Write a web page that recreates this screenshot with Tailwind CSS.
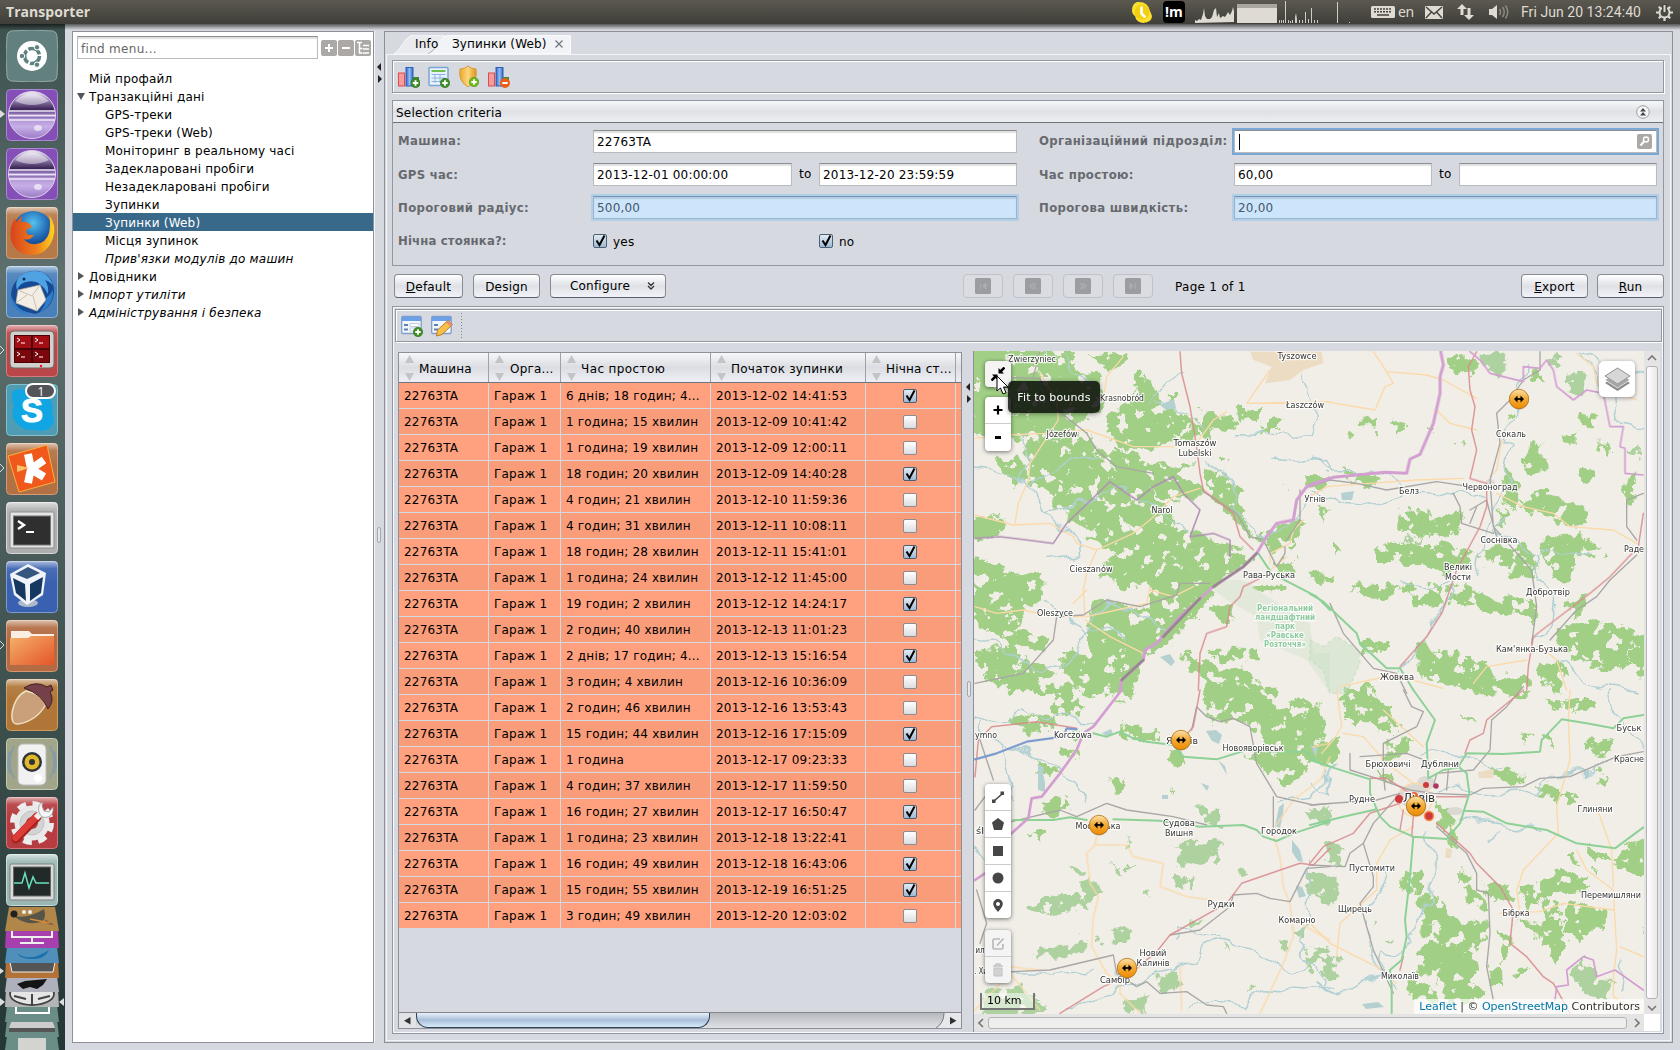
<!DOCTYPE html>
<html lang="uk">
<head>
<meta charset="utf-8">
<title>Transporter</title>
<script src="https://cdn.jsdelivr.net/npm/@tailwindcss/browser@4"></script>
</head>
<body class="w-[1680px] h-[1050px] overflow-hidden bg-[#d6d9df] font-['DejaVu_Sans',sans-serif] text-[12px] leading-[18px] tracking-[0.2px] text-black">
<svg width="0" height="0" class="absolute">
  <defs>
    <linearGradient id="gloss" x1="0" y1="0" x2="0" y2="1"><stop offset="0" stop-color="#fff" stop-opacity=".6"/><stop offset=".35" stop-color="#fff" stop-opacity=".08"/><stop offset="1" stop-color="#fff" stop-opacity="0"/></linearGradient>
    <linearGradient id="orb" x1="0" y1="0" x2="0" y2="1"><stop offset="0" stop-color="#f4effa"/><stop offset=".2" stop-color="#8f7ba8"/><stop offset=".38" stop-color="#3b2456"/><stop offset=".5" stop-color="#a488c9"/><stop offset=".75" stop-color="#c6aee6"/><stop offset="1" stop-color="#9c7cc6"/></linearGradient>
    <linearGradient id="org" x1="0" y1="0" x2="0" y2="1"><stop offset="0" stop-color="#fce2ae"/><stop offset=".45" stop-color="#f4ad3c"/><stop offset="1" stop-color="#ee8a00"/></linearGradient>
    <linearGradient id="fold" x1="0" y1="0" x2="1" y2="1"><stop offset="0" stop-color="#f5b06c"/><stop offset="1" stop-color="#e4552a"/></linearGradient>
    <linearGradient id="blu" x1="0" y1="0" x2="1" y2="0"><stop offset="0" stop-color="#2f68c8"/><stop offset=".5" stop-color="#8fbcf3"/><stop offset="1" stop-color="#2f68c8"/></linearGradient>
    <linearGradient id="gold" x1="0" y1="0" x2="1" y2="0"><stop offset="0" stop-color="#e9a82f"/><stop offset=".5" stop-color="#fbd77a"/><stop offset="1" stop-color="#dd9620"/></linearGradient>
    <radialGradient id="globe" cx=".5" cy=".3" r=".7"><stop offset="0" stop-color="#54c3ee"/><stop offset=".6" stop-color="#1d5fae"/><stop offset="1" stop-color="#0b2b6b"/></radialGradient>
    <linearGradient id="fox" x1="0" y1="0" x2="1" y2="0"><stop offset="0" stop-color="#d8431b"/><stop offset=".6" stop-color="#f0801d"/><stop offset="1" stop-color="#fbd51f"/></linearGradient>
    <symbol id="eclipse" viewBox="0 0 52 52"><circle cx="26" cy="26" r="23.5" fill="url(#orb)" stroke="#d9cdea" stroke-width="1"/><path d="M9 12Q25 -3 43 12Q26 20 9 12" fill="#fff" opacity=".45"/><path d="M3 22h46M2.500 26.500h47M3 31h46" stroke="#efe7f8" stroke-width="1.300"/><path d="M3 24h46M3 28.700h46" stroke="#8b6fb4" stroke-width="1"/><ellipse cx="32" cy="39" rx="4" ry="3" fill="#fff" opacity=".6"/></symbol>
    <symbol id="check" viewBox="0 0 14 14"><path d="M3.500 6.500l3 4.500L11.500 1.500" fill="none" stroke="#000" stroke-width="2"/></symbol>
    <symbol id="plusdot" viewBox="0 0 10 10"><circle cx="5" cy="5" r="4.700" fill="#3f8f26" stroke="#2c6a1a" stroke-width=".6"/><path d="M5 2.300v5.400M2.300 5h5.400" stroke="#fff" stroke-width="1.800"/></symbol>
    <symbol id="plusdotlight" viewBox="0 0 10 10"><circle cx="5" cy="5" r="4.700" fill="#6fb91c" stroke="#4e9212" stroke-width=".6"/><path d="M5 2.300v5.400M2.300 5h5.400" stroke="#fff" stroke-width="1.800"/></symbol>
    <symbol id="marker" viewBox="0 0 22 22"><circle cx="11" cy="11.500" r="10" fill="#7a6a50" opacity=".5"/><circle cx="11" cy="11" r="9.700" fill="url(#org)" stroke="#b8730f" stroke-width=".8"/><path d="M7 11h8" stroke="#000" stroke-width="1.700"/><path d="M9.500 7.500L6 11l3.500 3.500zM12.500 7.500L16 11l-3.500 3.500z"/></symbol>
    <filter id="rough" x="-5%" y="-5%" width="110%" height="110%"><feTurbulence type="fractalNoise" baseFrequency=".026" numOctaves="4" seed="8" result="n"/><feDisplacementMap in="SourceGraphic" in2="n" scale="56" xChannelSelector="R" yChannelSelector="G" result="d"/><feTurbulence type="fractalNoise" baseFrequency=".026" numOctaves="4" seed="21"/><feColorMatrix values="0 0 0 0 0 0 0 0 0 0 0 0 0 0 0 30 0 0 0 -18.600" result="h"/><feComposite in="d" in2="h" operator="out"/></filter>
    <filter id="wob" x="-5%" y="-5%" width="110%" height="110%"><feTurbulence type="fractalNoise" baseFrequency=".04" numOctaves="2" seed="5"/><feDisplacementMap in="SourceGraphic" scale="24" xChannelSelector="R" yChannelSelector="G"/></filter>
  </defs>
</svg>

<header class="relative z-20 flex h-[24px] items-center bg-linear-to-b from-[#5b594f] to-[#3f3e39] pl-[6px] text-[#dfdbd2] tracking-normal">
  <span class="w-[1125px] font-['Open_Sans',sans-serif] text-[14px] font-bold tracking-[0.05px]">Transporter</span>
  <svg class="w-[22px] h-[24px]" viewBox="0 0 22 24"><path d="M6 2Q1 4 1 10q0 4 3 6 1 6 8 7 9-1 9-7-1-3-2-5Q17 1 6 2z" fill="#fbe02c"/><circle cx="11" cy="12" r="7.500" fill="#f3cf12"/><path d="M10.500 7.500v6l3 3" fill="none" stroke="#fff" stroke-width="2.600" stroke-linecap="round"/></svg>
  <span class="ml-[10px] flex h-[22px] w-[22px] items-center justify-center rounded-[4px] bg-black font-['Open_Sans',sans-serif] text-[14px] font-bold text-white">!m</span>
  <svg class="ml-[10px] h-[24px] w-[156px]" viewBox="0 0 156 24" fill="#dfdbd2"><path d="M0 23v-3l2 1 2-2 2 1 2-6 1-6 1 8 2 3 3 0 2-2 2-7 2-2 1 9 2-4 1 5 3-2 2 1 2-3 1-2 2 3 2-4 1-4 1 4v11zM42 4h40v19H42z"/><path d="M42 4h40v4H42z" fill="#aaa69d"/><path d="M84 23v-3h1v3zm2 0v-3h1v3zm2 0v-3h1v3zM90 1h1v22h-1zm3 22v-3h1v3zm2 0v-2h1v2zm2 0v-3h1v3zm3 0v-6l1-4 1 6v4zm4 0v-3h1v3zm3 0v-3h1v3zm3 0V12h1v11zm3 0v-4h1v4zm3 0V8h1v15zm3 0v-3h1v3zm3 0v-3h1v3zM142 2h1v21h-1zm12 20h1v1h-1z" opacity=".9"/></svg>
  <svg class="ml-[20px] h-[14px] w-[24px]" viewBox="0 0 24 14"><rect y="1" width="24" height="12" rx="1.500" fill="#dfdbd2"/><path d="M3 4h18M3 6.800h18" stroke="#45433d" stroke-width="1.500" stroke-dasharray="2 1"/><path d="M6 10h12" stroke="#45433d" stroke-width="1.500"/></svg>
  <span class="ml-[3px] w-[27px] font-['Noto_Sans',sans-serif] text-[14px] tracking-[-0.3px]">en</span>
  <svg class="h-[13px] w-[18px]" viewBox="0 0 18 13"><rect width="18" height="13" rx="1" fill="#dfdbd2"/><path d="M1 1l8 7 8-7M1 12l5.500-6M17 12l-5.500-6" fill="none" stroke="#45433d" stroke-width="1.400"/></svg>
  <svg class="ml-[14px] h-[16px] w-[17px]" viewBox="0 0 17 16" fill="#dfdbd2"><path d="M5 0l5 5H6.500v6h-3V5H0zM12 16l-5-5h3.500V4h3v7H17z"/></svg>
  <svg class="ml-[15px] h-[16px] w-[20px]" viewBox="0 0 20 16"><path d="M0 5h3l5-4v14l-5-4H0z" fill="#dfdbd2"/><path d="M10.500 5q2 3 0 6M13.500 3q3.500 5 0 10M16.500 1.500q4.500 6.500 0 13" fill="none" stroke="#8d8a82" stroke-width="1.500"/></svg>
  <span class="ml-[12px] w-[135px] whitespace-nowrap font-['Roboto',sans-serif] text-[14px] tracking-[0.05px]">Fri Jun 20 13:24:40</span>
  <svg class="h-[17px] w-[17px]" viewBox="0 0 17 17" fill="none" stroke="#dfdbd2"><circle cx="8.500" cy="8.500" r="5" stroke-width="2"/><path d="M2.800 2.800l2 2M14.200 2.800l-2 2M2.800 14.200l2-2M14.200 14.200l-2-2M0 8.500h3M14 8.500h3M8.500 14v3" stroke-width="2.200"/><path d="M8.500 0v8" stroke="#45433d" stroke-width="5"/><path d="M8.500 1v7" stroke-width="2"/></svg>
</header>

<main class="relative flex h-[1026px]">
  <div class="pointer-events-none absolute inset-x-0 top-0 z-10 h-[6px] bg-linear-to-b from-black/60 to-transparent"></div>

  <nav class="relative flex w-[65px] flex-col gap-[7px] bg-linear-to-b from-[#3d514e] via-[#5f716e] via-25% to-[#243735] pl-[6px] pt-[6px]">
    <svg class="size-[52px] shrink-0" viewBox="0 0 52 52"><path d="M5 1Q26-1 47 1q4 1 4 5 2 20 0 40 0 4-4 5-21 2-42 0-4-1-4-5-2-20 0-40 0-4 4-5z" fill="#62817e" stroke="#8fa9a6"/><circle cx="26" cy="26" r="15" fill="#fff"/><circle cx="26" cy="26" r="7.500" fill="none" stroke="#5f8180" stroke-width="3.600" stroke-dasharray="13.700 2"/><g fill="#5f8180" stroke="#fff"><circle cx="16" cy="26" r="2.700"/><circle cx="31" cy="17.300" r="2.700"/><circle cx="31" cy="34.700" r="2.700"/></g></svg>
    <svg class="size-[52px] shrink-0" viewBox="0 0 52 52"><rect x=".5" y=".5" width="51" height="51" rx="4" fill="#8450b8" stroke="#a988cf"/><use href="#eclipse"/></svg>
    <svg class="size-[52px] shrink-0" viewBox="0 0 52 52"><rect x=".5" y=".5" width="51" height="51" rx="4" fill="#8450b8" stroke="#a988cf"/><use href="#eclipse"/></svg>
    <svg class="size-[52px] shrink-0" viewBox="0 0 52 52"><rect x=".5" y=".5" width="51" height="51" rx="4" fill="#b5794a" stroke="#d3a27c"/><rect width="52" height="22" rx="4" fill="url(#gloss)"/><circle cx="27" cy="24" r="20" fill="url(#globe)"/><path d="M43 8q8 10 4 23-5 15-19 17Q10 49 5 33 3 20 9 11l1 4 6-6-1 6q8-1 11 5-4 2-6 3 0 4 3 5 3 0 5 0-4 6-10 4 4 6 12 5 10-1 13-11 2-9 0-18z" fill="url(#fox)"/></svg>
    <svg class="size-[52px] shrink-0" viewBox="0 0 52 52"><rect x=".5" y=".5" width="51" height="51" rx="4" fill="#4a80ba" stroke="#8db4dc"/><rect width="52" height="22" rx="4" fill="url(#gloss)"/><path d="M13 12Q22 2 36 6q12 5 12 20-1 17-19 22l-8-2Q7 42 5 30q0-11 8-18z" fill="#174a94"/><path d="M12 13Q20 2 36 6q8 4 11 13-4-4-8-5 4 6 3 14Q34 12 20 16q-6 1-9 8-2-6 1-11z" fill="#4fa3e2"/><circle cx="18" cy="13" r="1.500" fill="#0d2b55"/><path d="M12 24l22-5 6 15-9 11-21-8z" fill="#f2eee6" stroke="#b9b2a5" stroke-width=".7"/><path d="M12 24l14 6 8-11M10 37l11-8M31 45l-4-15" fill="none" stroke="#c9bfae"/><path d="M5 28q4 16 20 20-14 1-19-12zM47 24q1 15-14 23 7-8 7-15 4-3 7-8z" fill="#2f7ccb"/></svg>
    <svg class="size-[52px] shrink-0" viewBox="0 0 52 52"><rect x=".5" y=".5" width="51" height="51" rx="4" fill="#b94649" stroke="#db7a7c"/><rect width="52" height="22" rx="4" fill="url(#gloss)"/><rect x="4" y="6" width="44" height="37" rx="4" fill="#d2d0cd" stroke="#6d6a67"/><rect x="8" y="10" width="36" height="28" fill="#470307"/><path d="M9 11h16v12H9zM27 11h16v12H27z" fill="#a30d14"/><path d="M9 25h16v12H9zM27 25h16v12H27z" fill="#7b070d"/><path d="M11 13l3 2-3 2M15 18h4M29 13l3 2-3 2M33 18h4M11 27l3 2-3 2M15 32h4M29 27l3 2-3 2M33 32h4" fill="none" stroke="#fff"/><circle cx="35" cy="41" r="1.200" fill="#e11"/></svg>
    <svg class="size-[52px] shrink-0 overflow-visible" viewBox="0 0 52 52"><rect x=".5" y=".5" width="51" height="51" rx="4" fill="#4f9db4" stroke="#84c0d0"/><path d="M6 14Q4 5 15 5q4 0 6 2 16-3 23 8 4 7 2 14 4 8-1 14-7 6-14 3-16 2-23-10-3-7 0-14-2-3-2-8z" fill="#12a5e4"/><text x="26" y="38" text-anchor="middle" font-family="Liberation Sans" font-weight="bold" font-size="33" fill="#fff" stroke="#fff" stroke-width="1">S</text><rect x="20" y="0" width="29" height="14" rx="7" fill="#54555a" stroke="#fff" stroke-width="2"/><text x="35" y="11.500" text-anchor="middle" font-family="Open Sans" font-size="12" fill="#fff">1</text></svg>
    <svg class="size-[52px] shrink-0" viewBox="0 0 52 52"><rect x=".5" y=".5" width="51" height="51" rx="4" fill="#b27145" stroke="#d59b73"/><rect width="52" height="22" rx="4" fill="url(#gloss)"/><path d="M2 13L41 2l8 37-36 10z" fill="#f0581c" stroke="#f9b13f"/><g stroke="#fff" stroke-width="8"><path d="M25 26L22 11M25 26l13-9M25 26l13 8M25 26l-3 14"/></g><path d="M11 22l12 3-12 4z" fill="#f9c26a"/></svg>
    <svg class="size-[52px] shrink-0" viewBox="0 0 52 52"><rect x=".5" y=".5" width="51" height="51" rx="4" fill="#adafae" stroke="#d5d6d5"/><rect width="52" height="22" rx="4" fill="url(#gloss)"/><rect x="4" y="10" width="44" height="36" rx="1" fill="#e4e4e4" stroke="#8b8b8b"/><rect x="7.500" y="14" width="37" height="29" fill="#2f2f2f" stroke="#777"/><path d="M12 19l6 4-6 4" fill="none" stroke="#fff" stroke-width="2.400"/><path d="M20 30h8" stroke="#fff" stroke-width="2"/></svg>
    <svg class="size-[52px] shrink-0" viewBox="0 0 52 52"><rect x=".5" y=".5" width="51" height="51" rx="4" fill="#3961b0" stroke="#7d9bd2"/><rect width="52" height="22" rx="4" fill="url(#gloss)"/><ellipse cx="22" cy="42" rx="10" ry="4" fill="#aeb9cd"/><path d="M4 13L22 3l18 9-3 22-16 10L8 34z" fill="#f0f4fa"/><path d="M9 13l13-7 12 6-13 6z" fill="#35577f"/><path d="M7 17l12 6 1 17-10-8zM37 16l-13 7v17l11-8z" fill="#16375f"/></svg>
    <svg class="size-[52px] shrink-0" viewBox="0 0 52 52"><rect x=".5" y=".5" width="51" height="51" rx="4" fill="#b26b43" stroke="#d59670"/><rect width="52" height="22" rx="4" fill="url(#gloss)"/><path d="M5 11h18l3 3h22v8H5z" fill="#fbeee4"/><path d="M4 18h18l3-2h23v29H4z" fill="url(#fold)"/></svg>
    <svg class="size-[52px] shrink-0" viewBox="0 0 52 52"><rect x=".5" y=".5" width="51" height="51" rx="4" fill="#af7637" stroke="#d09c5f"/><rect width="52" height="22" rx="4" fill="url(#gloss)"/><path d="M20 12Q36 15 40 25 31 42 12 45 5 46 6 34 9 17 20 12z" fill="#c9a07a" stroke="#ecdfc0" stroke-width="1.500"/><path d="M18 9Q30 1 41 8l4-2 2 5-3 2q5 8-2 17Q36 15 18 9z" fill="#75404a" stroke="#43201f"/></svg>
    <svg class="size-[52px] shrink-0" viewBox="0 0 52 52"><rect x=".5" y=".5" width="51" height="51" rx="4" fill="#a1a68a" stroke="#c6cab2"/><path d="M8 8Q0 24 8 40M44 8q8 16 0 32M4 13Q0 24 4 36M48 13q4 11 0 23" fill="none" stroke="#8399ab" stroke-width="1.500"/><rect x="12" y="6" width="28" height="41" rx="5" fill="#f1f1f1" stroke="#bbb"/><circle cx="26" cy="24" r="10" fill="#30333a"/><circle cx="26" cy="24" r="7.500" fill="#e0b92a"/><circle cx="26" cy="24" r="3" fill="#30333a"/><circle cx="32" cy="40" r="4" fill="#fff"/></svg>
    <svg class="size-[52px] shrink-0" viewBox="0 0 52 52"><rect x=".5" y=".5" width="51" height="51" rx="4" fill="#b53c40" stroke="#d97376"/><rect width="52" height="22" rx="4" fill="url(#gloss)"/><circle cx="26" cy="26" r="19" fill="none" stroke="#ececec" stroke-width="6" stroke-dasharray="8.500 6.420"/><circle cx="26" cy="26" r="17.500" fill="#e9e9e9"/><circle cx="26" cy="26" r="12" fill="#d3d3d3" stroke="#c2c2c2"/><circle cx="26" cy="26" r="6" fill="#b53c40"/><path d="M10 42L31 20" stroke="#a81f1d" stroke-width="9" stroke-linecap="round"/><path d="M9.500 41L31 19" stroke="#dd3d38" stroke-width="6.500" stroke-linecap="round"/><path d="M30 21l6-6" stroke="#eee" stroke-width="6"/><path d="M37 5q-6 3-4 10t9 5q6-2 5-10l-4 5-5-1-2-5z" fill="#f5f5f5" stroke="#999" stroke-width=".8"/></svg>
    <svg class="-mt-[2px] size-[52px] shrink-0" viewBox="0 0 52 52"><rect x=".5" y=".5" width="51" height="51" rx="4" fill="#9bb7b3" stroke="#c8dbd8"/><rect width="52" height="22" rx="4" fill="url(#gloss)"/><rect x="4" y="10" width="44" height="36" rx="1" fill="#d8dbda" stroke="#7b807f"/><rect x="7.500" y="13" width="37" height="29" fill="#222a29" stroke="#666"/><path d="M8 29h8l3-10 4 15 4-11 3 6h13" fill="none" stroke="#67e0b8" stroke-width="1.500"/></svg>
    <svg class="-ml-[6px] -mt-[7px] h-[144px] w-[65px] shrink-0" viewBox="0 0 65 144">
      <path d="M7 130h50l2 14H5z" fill="#6b8d87"/><path d="M18 132h28v12H18z" fill="#d3d3cf"/>
      <path d="M7 113h50l2 18H5z" fill="#6b8d87"/><path d="M12 114h40l3 8v4H9v-4z" fill="#ccc"/><path d="M9 122h46v4H9z" fill="#555"/>
      <path d="M7 99h50l2 17H5z" fill="#6b8d87"/><path d="M16 101v6h33v-6" fill="none" stroke="#fff" stroke-width="2"/>
      <path d="M6 84h52l1 17H5z" fill="#b4b6b5"/><ellipse cx="32" cy="88" rx="22" ry="11" fill="#e5e5e5" stroke="#444" stroke-width="1.800"/><path d="M14 90l12 3M50 90l-12 3M32 88v10" stroke="#444" stroke-width="2"/>
      <path d="M7 70h50l2 16H5z" fill="#aeb1bc"/><path d="M17 78l8-3 22-2-4 6-6 4-7-2-7 2z" fill="#151515"/>
      <path d="M6 55h52l1 17H5z" fill="#b37238"/><path d="M10 56h45l-2 10H12z" fill="#555" stroke="#eee"/>
      <path d="M7 41h50l2 16H5z" fill="#4f8fb9"/><path d="M17 47q12 10 32-3-4 9-16 9-13 0-16-6z" fill="#1a6fae"/>
      <path d="M6 24h52l1 18H5z" fill="#a83fae"/><path d="M12 25v6h40v-6M32 32v6M20 37h24" fill="none" stroke="#eee" stroke-width="2"/>
      <path d="M9 1h46l4 24H5z" fill="#b08748"/><path d="M14 10q14 3 30-7 3 10-3 13-16 4-27-6zM44 13l10 6-6-1z" fill="#57544a"/><path d="M30 13l20 4" stroke="#d88a35" stroke-width="1.500"/><circle cx="14" cy="8" r="3.500" fill="#222"/><circle cx="24" cy="6" r="2" fill="#eee"/><circle cx="30" cy="6" r="2" fill="#eee"/>
      <path d="M0 62l4 3-4 3M0 92l5 4-5 4zM64 92l-5 4 5 4z" fill="#ddd"/>
    </svg>
    <svg class="absolute left-0 top-[80px] h-[560px] w-[5px]" viewBox="0 0 5 560"><path d="M0 6l5 4-5 4z" fill="#ddd"/><g fill="none" stroke="#ddd"><path d="M0 242l4 4-4 4M0 360l4 4-4 4M0 537l4 4-4 4"/></g></svg>
  </nav>

  <aside class="ml-[7px] mt-[7px] flex h-[1012px] w-[302px] flex-col border border-[#8d9095] bg-white">
    <div class="flex items-center pl-[4px] pt-[4px]">
      <div class="h-[23px] w-[241px] border border-[#b9bbbf] border-t-[#8a8c90] bg-white pl-[3px] pt-px text-[12px] leading-[22px] tracking-[0.300px] text-[#666] shadow-[inset_0_2px_1px_#e0e0e0]">find menu...</div>
      <div class="ml-[3px] flex gap-px">
        <svg class="size-[16px]" viewBox="0 0 16 16"><rect width="16" height="16" rx="2" fill="#aba8a5"/><path d="M8 4v8M4 8h8" stroke="#fff" stroke-width="2"/></svg>
        <svg class="size-[16px]" viewBox="0 0 16 16"><rect width="16" height="16" rx="2" fill="#aba8a5"/><path d="M4 8h8" stroke="#fff" stroke-width="2"/></svg>
        <svg class="size-[16px]" viewBox="0 0 16 16"><rect width="16" height="16" rx="2" fill="#aba8a5"/><path d="M2 2.500h5M4.500 3v10h3M4.500 8.500h3M8 5.500h6M8 9h6M8 13h6" fill="none" stroke="#fff" stroke-width="1.500"/></svg>
      </div>
    </div>
    <ul id="tree" class="mt-[10px]"></ul>
  </aside>

  <div class="mt-[7px] flex h-[1012px] w-[10px] flex-col items-start border-l border-white/70 pl-px">
    <svg class="mt-[31px] h-[22px] w-[7px]" viewBox="0 0 7 22"><path d="M5 1v8L1 5zM2 13v8l4-4z" fill="#222"/></svg>
    <span class="ml-px mt-[443px] h-[16px] w-[4px] rounded-[2px] border border-[#a3a6ac] bg-[#e6e8ec]"></span>
  </div>

  <section class="mt-[7px] flex h-[1012px] w-[1289px] flex-col border border-[#8d9095] pb-px">
    <div class="flex h-[22px] pl-[9px] pt-[3px]">
      <div class="relative flex h-[19px] w-[177px]">
        <svg class="absolute inset-0" width="177" height="19" viewBox="0 0 177 19"><path d="M0 19Q4 17 8 10T18 0h30q3 0 4 3l-8 16z" fill="#e9ebef" stroke="#f8f9fb"/><path d="M34 19q5-2 10-10T56 0h118q3 0 3 3v16z" fill="#f1f3f7" stroke="#fff"/><path d="M34 19q5-2 10-10" fill="none" stroke="#a9adb5"/></svg>
        <span class="relative ml-[21px] w-[37px]">Info</span><span class="relative w-[103px] whitespace-nowrap tracking-[0.15px]">Зупинки (Web)</span>
        <svg class="relative mt-[5px] size-[8px]" viewBox="0 0 8 8"><path d="M.5.5l7 7M7.500.5l-7 7" stroke="#74777c" stroke-width="1.300"/></svg>
      </div>
    </div>
    <div class="mx-px flex flex-1 flex-col border border-[#f3f5f8] pl-[5px] pr-[6px] pt-[5px]">
      <div class="flex h-[33px] w-[1272px] items-center gap-[8px] border border-[#9297a1] pl-[5px] shadow-[inset_1px_1px_#fff,1px_1px_#fff]">
        <svg class="size-[22px]" viewBox="0 0 22 22"><rect x=".5" y="7" width="6" height="13" fill="#f79a9a" stroke="#e44a4c"/><rect x="8" y="1.500" width="7" height="18.500" fill="url(#blu)" stroke="#2c5fb5"/><path d="M15 11h6v10h-6z" fill="#3b8b3f"/><use href="#plusdot" x="12.500" y="12" width="10" height="10"/></svg>
        <svg class="size-[22px]" viewBox="0 0 22 22"><rect x="1" y="1.500" width="19" height="18" rx="1" fill="#e9f2fb" stroke="#7aa5d6" stroke-width="1.500"/><path d="M3.500 5h14" stroke="#6fbf4f" stroke-width="2"/><path d="M3.500 8.500h14M3.500 12h14M3.500 15.500h10M7 8v9M12 8v9" stroke="#8db4df"/><use href="#plusdot" x="12" y="12" width="10" height="10"/></svg>
        <svg class="size-[22px] overflow-visible" viewBox="-1 0 22 22"><path d="M1 3q5 0 8-3 3 3 8 3 2 12-8 18Q-1 15 1 3z" fill="url(#gold)" stroke="#d69a34"/><use href="#plusdotlight" x="10" y="11" width="10" height="10"/></svg>
        <svg class="size-[22px]" viewBox="0 0 22 22"><rect x=".5" y="7" width="6" height="13" fill="#f79a9a" stroke="#e44a4c"/><rect x="8" y="1.500" width="7" height="18.500" fill="url(#blu)" stroke="#2c5fb5"/><path d="M15 11h6v9h-6z" fill="#3b8b3f"/><circle cx="17" cy="17" r="5" fill="#ea5f15"/><path d="M14.300 17h5.400" stroke="#fff" stroke-width="2"/></svg>
      </div>

      <div class="mt-[7px] h-[166px] w-[1272px] border border-[#9297a1]">
        <div class="flex h-[22px] items-center justify-between border-b border-[#6d7178] bg-linear-to-b from-[#f6f7f9] via-[#dfe1e5] to-[#eceef2] pl-[3px] pr-[13px]">
          <span class="pt-[2px] tracking-[0.25px]">Selection criteria</span>
          <svg class="size-[14px]" viewBox="0 0 14 14"><circle cx="7" cy="7" r="6.300" fill="#f5f6f8" stroke="#999ca2"/><path d="M7 3l3 3.500H4zM7 7l3 3.500H4z" fill="#444"/></svg>
        </div>
        <div class="grid grid-cols-[195px_424px_22px_195px_423px] grid-rows-[23px_23px_23px_23px] gap-y-[10px] pl-[5px] pt-[7px] leading-[22px]">
          <b class="whitespace-nowrap text-[#66696f] text-[11.700px] leading-[23px] tracking-[0.350px]">Машина:</b>
          <div class="border border-[#b9bbbf] border-t-[#8a8c90] bg-white pl-[3px] shadow-[inset_0_2px_1px_#e0e0e0]">22763TA</div><i></i>
          <b class="whitespace-nowrap text-[#66696f] text-[11.700px] leading-[23px] tracking-[0.350px]">Організаційний підрозділ:</b>
          <div class="flex items-center justify-between border border-[#b9bbbf] border-t-[#8a8c90] bg-white px-[4px] shadow-[0_0_0_2px_#7aa7d3]"><span class="h-[16px] w-px bg-black"></span><svg class="size-[15px]" viewBox="0 0 15 15"><rect width="15" height="15" rx="2" fill="#aba8a5"/><circle cx="9" cy="5.500" r="2.500" fill="none" stroke="#fff" stroke-width="1.500"/><path d="M7 7.500L3.500 11.500" stroke="#fff" stroke-width="2"/></svg></div>

          <b class="whitespace-nowrap text-[#66696f] text-[11.700px] leading-[24px] tracking-[0.250px]">GPS час:</b>
          <div class="flex"><div class="w-[199px] border border-[#b9bbbf] border-t-[#8a8c90] bg-white pl-[3px] shadow-[inset_0_2px_1px_#e0e0e0]">2013-12-01 00:00:00</div><span class="w-[27px] pl-[7px] leading-[23px]">to</span><div class="w-[198px] border border-[#b9bbbf] border-t-[#8a8c90] bg-white pl-[3px] shadow-[inset_0_2px_1px_#e0e0e0]">2013-12-20 23:59:59</div></div><i></i>
          <b class="whitespace-nowrap text-[#66696f] text-[11.700px] leading-[24px] tracking-[0.350px]">Час простою:</b>
          <div class="flex"><div class="w-[198px] border border-[#b9bbbf] border-t-[#8a8c90] bg-white pl-[3px] shadow-[inset_0_2px_1px_#e0e0e0]">60,00</div><span class="w-[27px] pl-[7px] leading-[23px]">to</span><div class="w-[198px] border border-[#b9bbbf] border-t-[#8a8c90] bg-white shadow-[inset_0_2px_1px_#e0e0e0]"></div></div>

          <b class="whitespace-nowrap text-[#66696f] text-[11.700px] leading-[24px] tracking-[0.350px]">Пороговий радіус:</b>
          <div class="border border-[#9ab4d0] border-t-[#7593b3] bg-[#cde5fa] pl-[3px] text-[#45586b] shadow-[0_0_0_2px_#b3cfe8,inset_0_2px_1px_#b5cde4]">500,00</div><i></i>
          <b class="whitespace-nowrap text-[#66696f] text-[11.700px] leading-[24px] tracking-[0.350px]">Порогова швидкість:</b>
          <div class="border border-[#9ab4d0] border-t-[#7593b3] bg-[#cde5fa] pl-[3px] text-[#45586b] shadow-[0_0_0_2px_#b3cfe8,inset_0_2px_1px_#b5cde4]">20,00</div>

          <b class="whitespace-nowrap text-[#66696f] text-[11.700px] leading-[24px] tracking-[0.150px]">Нічна стоянка?:</b>
          <div class="flex items-center">
            <span class="size-[14px] rounded-[2px] border border-[#4b6076] bg-linear-to-b from-[#e2ebf3] to-[#9fb9d2]"><svg class="size-[14px] -ml-px -mt-px" viewBox="0 0 14 14"><use href="#check"/></svg></span><span class="w-[212px] pl-[6px] pt-[2px]">yes</span>
            <span class="size-[14px] rounded-[2px] border border-[#4b6076] bg-linear-to-b from-[#e2ebf3] to-[#9fb9d2]"><svg class="size-[14px] -ml-px -mt-px" viewBox="0 0 14 14"><use href="#check"/></svg></span><span class="pl-[6px] pt-[2px]">no</span>
          </div>
        </div>
      </div>

      <div class="mt-[8px] flex h-[24px] items-center pl-[2px] leading-[24px]">
        <button class="h-[24px] w-[69px] rounded-[4px] border border-[#888c93] border-b-[#5c6068] bg-linear-to-b from-white via-[#dfe1e6] to-[#f1f3f8]"><u>D</u>efault</button>
        <button class="ml-[10px] h-[24px] w-[67px] rounded-[4px] border border-[#888c93] border-b-[#5c6068] bg-linear-to-b from-white via-[#dfe1e6] to-[#f1f3f8]">Design</button>
        <button class="ml-[10px] flex h-[24px] w-[116px] items-center rounded-[4px] border border-[#888c93] border-b-[#5c6068] bg-linear-to-b from-white via-[#dfe1e6] to-[#f1f3f8] pl-[19px] leading-[20px]">Configure<svg class="ml-[17px] size-[8px]" viewBox="0 0 8 8"><path d="M1 .5l3 3 3-3M1 4l3 3 3-3" fill="none" stroke="#333" stroke-width="1.300"/></svg></button>
        <div class="ml-[297px] flex gap-[10px]">
          <span class="flex h-[24px] w-[40px] items-center justify-center rounded-[4px] border border-[#bfc2c8] bg-[#dadce1]"><svg class="size-[16px]" viewBox="0 0 16 16"><rect width="16" height="16" rx="1.500" fill="#9b9da0"/><path d="M5.500 5v6M11 5L7.500 8l3.500 3z" stroke="#abadaf" fill="#abadaf"/></svg></span>
          <span class="flex h-[24px] w-[40px] items-center justify-center rounded-[4px] border border-[#bfc2c8] bg-[#dadce1]"><svg class="size-[16px]" viewBox="0 0 16 16"><rect width="16" height="16" rx="1.500" fill="#9b9da0"/><path d="M8 5L5 8l3 3M11 5L8 8l3 3" stroke="#abadaf" fill="none" stroke-width="1.500"/></svg></span>
          <span class="flex h-[24px] w-[40px] items-center justify-center rounded-[4px] border border-[#bfc2c8] bg-[#dadce1]"><svg class="size-[16px]" viewBox="0 0 16 16"><rect width="16" height="16" rx="1.500" fill="#9b9da0"/><path d="M5 5l3 3-3 3M8 5l3 3-3 3" stroke="#abadaf" fill="none" stroke-width="1.500"/></svg></span>
          <span class="flex h-[24px] w-[40px] items-center justify-center rounded-[4px] border border-[#bfc2c8] bg-[#dadce1]"><svg class="size-[16px]" viewBox="0 0 16 16"><rect width="16" height="16" rx="1.500" fill="#9b9da0"/><path d="M10.500 5v6M5 5l3.500 3L5 11z" stroke="#abadaf" fill="#abadaf"/></svg></span>
        </div>
        <span class="ml-[22px] flex-1 pt-px tracking-[0.300px]">Page 1 of 1</span>
        <button class="h-[24px] w-[67px] rounded-[4px] border border-[#888c93] border-b-[#5c6068] bg-linear-to-b from-white via-[#dfe1e6] to-[#f1f3f8]"><u>E</u>xport</button>
        <button class="ml-[9px] h-[24px] w-[67px] rounded-[4px] border border-[#888c93] border-b-[#5c6068] bg-linear-to-b from-white via-[#dfe1e6] to-[#f1f3f8]"><u>R</u>un</button>
      </div>

      <div class="mt-[8px] h-[728px] w-[1272px] border border-[#9297a1] pl-[2px] pt-[2px] shadow-[inset_0_0_0_1px_#f6f8fb]">
        <div class="flex h-[33px] w-[1267px] items-center gap-[8px] border border-[#9297a1] pl-[5px] shadow-[inset_1px_1px_#fff,1px_1px_#fff]">
          <svg class="size-[22px]" viewBox="0 0 22 22"><rect x=".7" y="1.500" width="19.500" height="17" rx="1" fill="#f2f6fb" stroke="#7f9fca" stroke-width="1.300"/><path d="M1 2h19v4H1z" fill="#6b9fe8"/><path d="M3 10h4M3 14.500h4" stroke="#5b7fb8" stroke-width="2"/><path d="M9 8.500h9v3H9zM9 13h7v3H9z" fill="#fff" stroke="#c3cfdf"/><use href="#plusdot" x="12" y="12" width="10" height="10"/></svg>
          <svg class="size-[22px]" viewBox="0 0 22 22"><rect x=".7" y="1.500" width="19.500" height="17" rx="1" fill="#f2f6fb" stroke="#7f9fca" stroke-width="1.300"/><path d="M1 2h19v4H1z" fill="#6b9fe8"/><path d="M3 10h4M3 14.500h4" stroke="#5b7fb8" stroke-width="2"/><path d="M5.500 21l1-6L17 5.500l4.500 4L11 19.500z" fill="#f6c148" stroke="#b97a23"/><path d="M17 5.500l4.500 4-2 2-4.500-4z" fill="#e98a76"/></svg>
          <svg class="h-[26px] w-px" viewBox="0 0 1 26"><path d="M.5 0v26" stroke="#85888e" stroke-dasharray="1 2"/></svg>
        </div>
        <div class="mt-[9px] flex h-[681px] pl-[3px]">
          <div class="mt-px flex h-[677px] w-[564px] flex-col border border-[#8d9097]">
            <div class="flex h-[30px] border-b border-[#70747b] bg-linear-to-b from-[#f6f7f9] via-[#dbdde2] to-[#eef0f5] text-[12px]">
              <div class="flex w-[90px] items-center border-r border-[#9da1a9]"><svg class="ml-[6px] mr-[5px] h-[26px] w-[9px]" viewBox="0 0 9 26"><path d="M0 8l4.500-8L9 8zM0 18l4.500 8L9 18z" fill="#c3c4c6"/></svg><span class="mt-[3px]">Машина</span></div>
              <div class="flex w-[72px] items-center border-r border-[#9da1a9]"><svg class="ml-[6px] mr-[6px] h-[26px] w-[9px]" viewBox="0 0 9 26"><path d="M0 8l4.500-8L9 8zM0 18l4.500 8L9 18z" fill="#c3c4c6"/></svg><span class="mt-[3px]">Орга...</span></div>
              <div class="flex w-[150px] items-center border-r border-[#9da1a9]"><svg class="ml-[6px] mr-[5px] h-[26px] w-[9px]" viewBox="0 0 9 26"><path d="M0 8l4.500-8L9 8zM0 18l4.500 8L9 18z" fill="#c3c4c6"/></svg><span class="mt-[3px] tracking-[0.400px]">Час простою</span></div>
              <div class="flex w-[155px] items-center border-r border-[#9da1a9]"><svg class="ml-[6px] mr-[5px] h-[26px] w-[9px]" viewBox="0 0 9 26"><path d="M0 8l4.500-8L9 8zM0 18l4.500 8L9 18z" fill="#c3c4c6"/></svg><span class="mt-[3px] tracking-[0.250px]">Початок зупинки</span></div>
              <div class="flex w-[90px] items-center border-r border-[#9da1a9]"><svg class="ml-[6px] mr-[5px] h-[26px] w-[9px]" viewBox="0 0 9 26"><path d="M0 8l4.500-8L9 8zM0 18l4.500 8L9 18z" fill="#c3c4c6"/></svg><span class="mt-[3px] whitespace-nowrap">Нічна ст...</span></div>
            </div>
            <div id="rows" class="flex-1"></div>
            <div class="flex h-[16px] border-t border-[#83868c] bg-linear-to-b from-[#b5b8bd] to-[#dfe1e6]">
              <svg class="h-[15px] w-[17px]" viewBox="0 0 17 15"><path d="M0 0h17v15H0z" fill="#e1e3e7"/><path d="M11.500 4v7.500L5 7.700z" fill="#333"/></svg>
              <span class="h-[15px] w-[294px] rounded-b-[12px] border border-t-0 border-[#2e4257] bg-linear-to-b from-[#e9f0f8] via-[#a9bfd8] to-[#d8ebfb]"></span>
              <span class="flex-1"></span>
              <svg class="h-[15px] w-[25px]" viewBox="0 0 25 15"><path d="M8 0q0 10-8 15h25V0z" fill="#e6e8ec"/><path d="M8 0q0 10-8 15" fill="none" stroke="#777"/><path d="M14 4v7.500l6.500-3.800z" fill="#333"/></svg>
            </div>
          </div>
          <div class="flex w-[12px] flex-col items-end border-r border-[#8d9097] pr-px">
            <svg class="mt-[31px] h-[22px] w-[7px]" viewBox="0 0 7 22"><path d="M5 1v8L1 5zM2 13v8l4-4z" fill="#222"/></svg>
            <span class="mr-px mt-[277px] h-[16px] w-[4px] rounded-[2px] border border-[#a3a6ac] bg-[#e6e8ec]"></span>
          </div>
          <div class="flex w-[686px] flex-col">
            <div class="flex h-[663px]">
              <div class="relative h-[663px] w-[670px] overflow-hidden bg-[#f1eee8]">
                <svg class="absolute inset-0" width="670" height="663" viewBox="974 351 670 663" id="map">
                  <g stroke-linejoin="round">
                  <!-- woodland, north-west -->
                  <g transform="translate(962 342) scale(.33333)"><g id="nw" fill="#a0cf85" filter="url(#rough)">
                    <path d="M30 20H340L330 75 365 95 400 90 420 125 430 180 415 220 350 235 340 280 300 290 130 285 30 283zM190 300L235 275 300 280 390 280 400 330 440 380 500 400 560 400 620 450 640 480 560 450 600 480 620 520 650 560 700 570 760 590 860 620 880 650 830 680 760 720 740 760 720 740 650 740 610 710 550 700 520 690 470 720 480 640 430 620 370 600 400 570 310 540 320 500 270 495 280 460 200 420 215 370 190 340z"/>
                    <path d="M440 210L500 180 530 90 560 110 600 170 680 230 710 260 680 300 640 290 600 300 560 330 480 320 440 280zM380 40L490 25 500 60 440 90zM400 330L470 320 530 350 640 370 690 360 640 400 690 420 720 450 680 480 620 450 540 420 480 400zM700 200L750 210 780 230 830 220 820 260 760 255 750 300 710 290zM830 200L900 205 890 240 840 230zM905 235L960 230 955 270 910 270zM720 380L780 390 830 450 850 530 880 590 830 550 790 500 740 450z"/>
                    <path d="M880 590L950 550 1010 530 1030 545 990 620 930 620zM30 535L110 515 130 550 100 590 30 600zM30 650L110 660 170 700 240 690 245 780 200 790 150 870 270 890 240 930 150 910 100 880 30 820zM560 620L700 600 820 620 870 640 780 710 750 760 700 820 600 920 540 960 490 1000 430 1000 380 920 370 860 400 770 550 800 560 720 480 740 420 700 440 640z"/>
                    <path d="M30 930L160 910 200 960 290 990 280 1050 150 1050 80 1020zM300 940L460 920 530 960 510 1060 360 1060 310 990zM740 920L885 920 885 955 760 955zM650 930L720 940 770 990 850 970 910 1060 740 1060 700 990zM850 735L970 730 970 755 860 760zM750 780L815 790 800 845 760 830zM1050 690L1110 700 1095 730zM1035 410L1100 400 1090 440 1040 440zM100 350L180 350 200 400 150 430zM930 655L1000 655 1000 695 950 695zM960 430L980 420 985 440zM770 350L800 345 790 370zM620 150L650 150 645 175 620 175z"/>
                  </g></g>
                  <g transform="translate(1312 342) scale(.33333)"><g fill="#a0cf85" filter="url(#rough)">
                    <path d="M400 50L470 45 500 70 480 105 420 95zM650 80L690 75 695 120 655 120zM795 205L850 220 840 255 800 235zM635 350L655 305 690 305 695 390 650 405 630 380zM760 280L800 265 800 305 770 305zM795 380L830 370 855 400 825 425 800 410zM855 295L905 315 890 345zM935 410L980 395 960 490 935 440zM580 360L620 420 625 480 600 510 570 450zM625 480L700 450 770 480 820 500 825 545 740 555 700 500 650 515zM250 510L330 500 410 520 445 510 455 560 400 585 300 575 250 560z"/>
                    <path d="M195 610L300 600 470 620 495 640 470 680 400 690 320 670 195 665zM520 620L640 615 670 650 660 705 610 710 590 680 520 645zM680 600L800 570 890 640 800 650 780 710 720 700 700 650zM260 735L380 730 400 785 320 790zM110 740L220 720 255 730 240 765 190 770zM400 730L480 730 510 760 570 780 580 750 650 770 670 800 670 850 620 810 550 830 500 790 430 790zM770 770L830 755 830 805 780 825zM60 600L95 620 60 635zM-10 685L60 700 50 725-10 710zM-20 405L40 405 40 435-20 440zM740 860L830 830 960 860 955 960 880 990 830 960 740 930z"/>
                    <path d="M960 880L1020 860 1020 1010 960 980zM310 900L360 920 420 930 500 960 550 1000 650 1010 650 1060 500 1060 380 1020 320 1000zM680 970L740 960 770 1000 740 1060 690 1030zM150 900L230 900 220 925 150 930zM80 385L200 395 190 435 100 415zM150 230L200 225 195 250 150 250zM240 240L280 255 255 280zM360 240L380 245 360 290zM430 295L460 300 455 320 425 315zM90 265L120 270 110 285zM180 260L210 270 190 290zM560 500L585 510 575 550 560 540zM590 220L605 220 600 245zM20 500L45 490 30 545z"/>
                    <path fill="#aed1a0" d="M700 40L745 30 755 70 720 75zM750 120L785 75 825 110 815 160 790 180zM505 35L580 35 580 90 530 100zM950 320L985 320 980 350zM260 600L330 580 330 600z"/>
                  </g></g>
                  <g transform="translate(962 692) scale(.33333)"><g fill="#a0cf85" filter="url(#rough)">
                    <path d="M275-20L330-20 360 50 350 75 270 60zM150 75L210 65 270 75 285 105 200 130 165 100zM445 265L485 250 495 290 460 310zM235 340L310 310 320 340 280 375 235 365zM200 420L250 405 235 460zM480 100L600 120 600 145 520 150 470 130zM620 170L665 180 655 220 625 215zM720-10H940L950 60 1010 20 1080 40 1090 110 1060 160 1120 200 1050 215 1000 260 960 285 920 240 840 190 920 160 860 90 790 80 740 90zM450 0L520-10 500 30 460 20zM225 210L290 230 260 260 230 240zM310 165L345 170 340 200 310 200zM610 290L635 290 630 310zM310 120L370 120 350 150z"/>
                    <path fill="#aed1a0" d="M195 640L300 600 340 600 375 555 415 600 390 640 300 660 240 685zM640 460L780 450 770 510 700 505 650 525zM225 770L330 755 360 735 380 760 340 785 230 800zM445 530L520 515 480 545zM585 845L650 850 655 880 600 905zM485 930L560 905 560 960 500 970zM65 900L180 885 260 950 150 980 65 980zM700 345L770 350 785 405 720 390zM1035 755L1120 780 1110 800 1050 790zM445 720L515 712 500 745 460 750zM1030 540L1120 560 1120 640 1040 595zM640 550L695 560 690 595 650 590zM320 515L360 530 350 555zM480 430L515 460 500 465zM545 605L575 605 565 625zM400 730L440 740 420 760zM670 685L720 690 680 710zM855 870L880 880 860 895zM990 700L1030 710 1010 740zM1040 350L1110 360 1110 400 1050 380zM830 530L870 540 830 555zM780 750L800 750 800 770zM940 750L980 760 970 780z"/>
                  </g></g>
                  <g transform="translate(1312 692) scale(.33333)"><g fill="#a0cf85" filter="url(#rough)">
                    <path d="M85-15H180L220 40 265 100 250 120 205 120 160 80 130 90 90 60zM10 150L75 135 85 190 40 225-10 200zM215 150L290 145 310 180 240 190 220 225zM700 20L860 25 850 50 730 50zM530 225L640 240 640 275 560 265zM670 275L800 305 790 340 690 315zM850 225L890 240 885 290 850 285zM365 330L430 360 435 440 420 470 390 410zM920 480L1020 420 1020 560 930 540 900 500zM620 590L700 560 740 525 800 560 835 590 700 605 680 640 640 650zM510 565L590 580 605 620 550 640z"/>
                    <path d="M320 620L350 595 400 640 430 680 500 720 470 790 500 820 480 860 515 900 480 935 400 925 400 870 350 850 310 840 330 760 310 740 330 690zM440 580L520 610 530 650 480 645zM470 700L525 680 520 750 480 785zM560 715L605 740 580 800 530 835 540 885 570 885zM280 875L370 865 370 925 300 925zM700 610L745 660 765 760 730 825 700 760 690 700zM610 685L700 700 690 745zM755 640L885 645 880 700 800 745 760 700zM250 560L330 535 330 600 280 605zM830 470L900 490 850 545zM440 540L490 550 470 580zM760 485L800 490 790 510zM820 150L910 145 900 185 850 190zM690 130L720 130 720 160zM630 130L660 135 640 150zM605 830L640 830 620 860zM740 560L830 560 820 600zM990 700L1010 710 1000 740zM200 235L250 250 230 270zM445 70L500 95 460 95z"/>
                    <path fill="#aed1a0" d="M770 825L820 795 860 850 905 870 890 925 820 910zM-10 790L80 805 75 850-10 845zM20 560L85 575 50 640-10 595zM40 445L95 460 90 525 40 505zM170 675L200 690 185 700zM220 735L250 740 230 750z"/>
                  </g></g>

                  <g transform="translate(960 340) scale(.33333)"><path d="M750 740Q850 690 905 760L990 810 1050 850 1060 940 1110 940V1060L1040 960 900 900 890 830 800 780z" fill="#c5e0c0" opacity=".35"/><path d="M870 35H1085L1090 70 1030 90 990 120 915 130 935 80 880 60z" fill="#eddcc4"/></g>
                  <g transform="translate(1310 340) scale(.33333)"><path d="M0 900L40 920 80 890 145 930 150 970 110 1060H60L40 990 0 960z" fill="#c5e0c0" stroke="#a8d3a8" stroke-width="4" stroke-dasharray="12 8" opacity=".45"/></g>

                  <!-- built-up areas and water bodies -->
                  <g fill="#dcd9d5"><ellipse cx="1414" cy="796" rx="16" ry="12"/><ellipse cx="1490" cy="484" rx="5" ry="5"/><ellipse cx="1426" cy="783" rx="9" ry="7"/><ellipse cx="1120" cy="973" rx="6" ry="5"/><ellipse cx="1455" cy="811" rx="8" ry="4"/></g>
                  <path d="M1478 772l16-3-1 9-14 0zM1446 848l6 1-1 9-6 0z" fill="#eddcc4"/>
                  <g fill="#b5d0d0"><path d="M1038 764l6 4-1 6 2 8 0 10-7-2zM1206 731l10-1 6 5-3 9-7-3zM1160 657l10-3 5 8-4 4zM1292 840l8 10 3 12-5-1-6-9zM1296 886l6 1 4 9-7 2zM1279 807l5-4-1 11-3 14-5-2zM1201 783l8 3-2 5zM1218 760l7 6 2 9zM1102 733l9-4 2 5-5 3zM1160 405l14-6 2 9-10 2zM1341 493l13-2-2 9-10 0zM1310 745l8 3-2 9zM1362 1004l16-2 6 5-18 2zM1162 795l6 0 0 4-6 0z"/></g>

                  <g fill="none" stroke-linecap="round">
                    <g filter="url(#wob)"><g stroke="#b1d0d3" stroke-width="4.500">
                      <g transform="translate(964 344) scale(.33333)"><path d="M20 375L80 380 140 395 180 400 200 425 250 500 300 550 345 590 350 630 250 640M200 420L270 385 340 350 400 335M260 510L300 480 420 450 480 430 520 460 600 500 660 560M195 270L180 370 160 395M290 40L330 90 390 110M560 180L600 105 660 95M580 170L640 200 720 245M740 350L790 400 830 460 850 530 870 580 930 580 1000 510 1050 460M1020 90L1040 130 1045 220 1030 280 800 275M930 340L1000 345 1060 340 1110 375M20 870L120 910 200 960 290 970 360 900 380 840 370 800 420 780 500 790 600 850M370 850L430 860 480 890M240 770L320 830 370 870"/></g>
                      <g transform="translate(1314 344) scale(.33333)"><path d="M-20 340L50 350 70 380 170 380 250 410 270 450 170 490 80 480 0 450M300 440L400 450 450 460 520 450M640 80L620 160 580 240 570 300 595 310 580 400 560 450 530 520 510 600 490 700M560 510L550 560 590 590 660 640 670 700 710 730 730 790 720 850 670 900M670 640L700 620 840 640M405 730L400 800 340 860 310 900 250 980M270 710L320 725 410 720M810 40L850 100 890 150 900 230 1000 250M820 40L900 70 1010 90M730 940L760 970 850 1030 960 1050M40 380L60 385"/></g>
                      <g transform="translate(964 694) scale(.33333)"><path d="M20 80L140 75 180 45 250 70 400 80M50 80L60 130 130 150 170 160 240 200 300 250 350 270 380 310M120 150L150 240 130 320M30 460L60 500 70 600M300 950L360 940 480 870 540 850 640 830 720 760 800 740 870 770 930 800 980 830 1040 820M620 730L640 700 690 720 760 740M680 950L740 920 830 930 900 890 1000 900 1110 880M1020 500L1020 600 1040 680 1000 750 1060 820 1080 880M150 840L260 840 390 825M950 320L1040 310 1110 220"/></g>
                      <g transform="translate(1314 694) scale(.33333)"><path d="M880 0L890 40 920 80 950 130 1000 160M320 180L480 190 560 220M370 290L430 270 540 300 680 290 720 240 840 230 850 210 880 210M450 380L570 390 640 400 690 400M340 410L370 520 340 610 310 680 290 760 250 790 210 780 200 830 130 890 60 900 0 870M150 690L180 790 240 880M190 520L215 600 150 640M930 800L920 900M0 260L50 300 30 240M510 430L550 410"/></g>
                    </g></g>
                    <g stroke="#fbd9a8" stroke-width="4">
                      <g transform="translate(960 340) scale(.33333)"><path d="M430 180L440 110 490 50M45 295L150 285 250 280 380 270 480 305 520 320 640 320 710 310 760 240 800 215M240 100L290 180 295 240 210 370 205 420 175 490 165 550M45 525L160 555 270 550 340 590 350 610 410 630 520 580 570 540 640 470 720 445M410 630L380 700 370 750 375 830M375 830L280 830 190 810 110 820 45 800M380 750L340 790M375 840L450 890 550 940M570 750L640 770 700 740M860 190L930 90M860 190L1000 190M860 190L1110 185M930 670L930 640 990 610 1000 570 1030 540M380 830L470 810 560 790 570 740M980 650L930 690"/></g>
                      <g transform="translate(1310 340) scale(.33333)"><path d="M190 35L230 95 350 105 400 120 500 175M230 95L250 130 225 140 195 210 45 185M380 210L420 250 500 270M800 40L850 80 860 130 980 180M0 470L50 440 180 430 320 420 460 415M560 460L640 500 730 520 780 560 910 570 980 610M575 300L560 390 540 410M490 1030L530 980 650 960M90 1040L250 1005 400 1045M690 920L740 960 770 1050"/></g>
                      <g transform="translate(960 690) scale(.33333)"><path d="M410 440L405 465 500 465 520 500 610 520 600 590 680 620 760 630M405 465L380 490 390 580 415 620 400 680 395 770 440 850 480 880 480 910 540 970M45 960L150 850 240 960M150 830L240 840M935 420L960 500 970 590 990 640 1000 740 970 820 900 970M1110 200L1080 270 1000 330 945 410M660 830L665 960M1000 690L1110 750M1060 170L1110 160"/></g>
                      <g transform="translate(1310 690) scale(.33333)"><path d="M80 0L95 110 70 150 35 190M100 130L160 140 230 220 310 280M780 0L775 90 780 210 740 350 745 430 640 540 620 600 630 670M860 350L905 480 910 590M800 480L830 540 910 600 920 780 910 860 910 920 1000 970M570 670L690 665 760 640 910 660M0 700L60 760 200 830 260 880M80 800L90 700 200 600 200 520 240 450 310 410M930 770L1000 800M220 60L340 170"/><circle cx="315" cy="330" r="50"/></g>
                    </g>
                    <g stroke="#a8a7a5" stroke-width="4">
                      <g transform="translate(960 340) scale(.33333)"><path d="M90 110L240 115 280 200 380 280 410 330 470 380 580 400M45 1030L190 1000 280 900 290 830 370 825 440 780 540 800 650 765 660 730 750 730M730 455L830 520 870 590 910 600 950 680 975 640 975 620M1020 450L1020 540 980 600M220 110L240 35"/></g>
                      <g transform="translate(1310 340) scale(.33333)"><path d="M690 35L690 90 640 120 600 180 560 220 570 310 540 420 550 560 665 690 680 800 665 910M0 440L60 420 140 430 230 450 380 425 480 440M430 460L450 500 455 550 550 580M530 480L540 520 560 590M530 480L480 510M1000 460L950 480 950 560 980 600M980 645L900 720 860 770 800 810 720 900M60 790L100 880 190 985 260 1000 290 1060M480 550L500 500"/></g>
                      <g transform="translate(960 690) scale(.33333)"><path d="M60 150L100 270M45 360L75 320M155 395L300 360 350 380 440 340 500 360 640 380 740 405M695 120L710 50 740 80 780 95 820 85 870 110 890 220 950 320 1060 345 1110 340M940 320L940 420M990 635L930 625 890 610 820 615 810 650 720 720 630 735M990 635L1040 535 1110 530M155 845L270 840 460 795 470 850 530 890 560 875 600 910 680 905 740 945 790 950 800 970M50 600L80 700 60 760"/></g>
                      <g transform="translate(1310 690) scale(.33333)"><path d="M280 0L305 50 340 65 320 110 220 160 220 250 225 300M120 190L120 240 200 265 300 300 370 310 480 315 520 295 640 290 690 265 780 260 920 200 1000 185M0 345L200 330 270 310 190 400 160 460 120 490 105 530 0 525M160 460L190 560 190 590 150 640 190 780 250 910M640-10L590 50 545 90 540 180 490 240 380 250 370 290M380 410L470 490 500 550 500 600 535 610 540 730 530 830 550 930M150 200L290 190 370 220M415 240L410 300"/></g>
                    </g>
                    <g stroke="#d9898c" stroke-width="4.500" opacity=".85">
                      <g transform="translate(960 340) scale(.33333)"><path d="M660 35L665 100 690 200 710 320 720 400 730 450 820 520 840 590 880 630M900 715L850 740 840 770 810 800 800 860 740 880 720 940 715 1050"/></g>
                      <g transform="translate(1310 340) scale(.33333)"><path d="M500 35L475 80 480 150 495 200 485 270 500 330 480 415 530 430 530 500 510 560 440 690 395 820 350 890 270 980M1000 520L985 620 900 710 840 760 670 890 655 980 650 1050"/></g>
                      <g transform="translate(960 690) scale(.33333)"><path d="M45 260L55 150 95 110 230 95 350 115M720 0L700 110 665 150M300 970L430 890 500 860 590 785 630 735 800 640 845 580 1020 520 1060 525 1110 475"/></g>
                      <g transform="translate(1310 690) scale(.33333)"><path d="M640 0L530 90 520 130 480 150 465 190M0 520L40 470 130 430 180 370 270 340M180 265L230 265 300 310M310 380L305 440M380 400L480 490 500 520 570 590 610 660 600 760 650 800 700 860 730 880 780 970M270 420L280 360M380 320L470 320M270 840L280 800"/></g>
                    </g>
                    <g stroke="#8ed197" stroke-width="6">
                      <g transform="translate(960 340) scale(.33333)"><path d="M895 640L935 700 1070 770 1110 810"/></g>
                      <g transform="translate(1310 340) scale(.33333)"><path d="M0 762L40 785 140 880 150 910 230 985 270 985 310 1050"/></g>
                      <g transform="translate(960 690) scale(.33333)"><path d="M400 130L440 140 480 125 520 145 560 155 640 165 670 200 770 208 860 180 950 185 1040 185 1070 215 1110 230M160 390L280 390 330 382 380 390M460 388L600 392 720 410 850 405 890 420 910 440 950 453 1000 430 1110 395" /></g>
                      <g transform="translate(1310 690) scale(.33333)"><path d="M310 0L375 90 350 160 355 265M0 210L60 230 180 268 180 310 210 380 240 410 310 440 410 447 450 400 478 310 470 250 445 230 470 190 580 192 690 185 695 150 720 125 755 88 830 100 910 115 940 85 1000 75M355 265L400 240 450 232M0 405L100 380 200 358M310 440L300 560 285 690 290 740 275 810 240 840 245 890 245 970M465 362L520 365 590 400 710 420 800 460 915 475 1000 412"/></g>
                    </g>
                    <g transform="translate(960 690) scale(.33333)"><path d="M45 208L110 190 200 155 310 140 320 115 350 118" stroke="#7d9dcf" stroke-width="6.500"/></g>
                    <g stroke="#d29fd0">
                      <g transform="translate(960 340) scale(.33333)"><path d="M480 1050L485 1020 550 960 555 930 590 910 660 830 760 740 850 680 890 640 920 590 950 550 1000 540 1010 480 1040 440 1110 415" stroke-width="9"/><path d="M890 640L850 680 760 740M720 775L610 890M550 960L485 1020" stroke="#96858f" stroke-width="8"/><path d="M45 595L120 590 200 600 280 610 320 550 450 425 500 460 530 480 580 440 640 410 670 460 720 510 690 590M690 590L760 580 810 600 810 650" stroke-width="4.500" stroke="#b08db3"/></g>
                      <g transform="translate(1310 340) scale(.33333)"><path d="M0 435L70 412 225 397 290 400 300 357 330 343 370 250 390 160 390 110 400 75 392 35" stroke-width="9"/><path d="M480 35L510 60 540 100 640 125 640 80 690 85 710 60 730 90 740 140 790 180 830 150 880 160 900 260 940 260 930 320 945 325 945 400 1000 405" stroke-width="5"/></g>
                      <g transform="translate(960 690) scale(.33333)"><path d="M485 0L400 110 370 130 350 180 300 250 245 320 215 325 205 385 155 430M75 550L45 570" stroke-width="8"/></g>
                      <g transform="translate(1310 690) scale(.33333)"><path d="M735 930L740 890 775 885 770 840 820 800 850 810 860 860 915 840 1000 900" stroke-width="5"/></g>
                    </g>
                  </g>
                  <g fill="#d0393c"><circle cx="1426" cy="785" r="3"/><circle cx="1436" cy="786" r="2.700" fill="#b03560"/><circle cx="1399" cy="799" r="4"/><circle cx="1414" cy="796" r="4" fill="#f0603a"/><circle cx="1429" cy="816" r="4.500" stroke="#f58a4a" stroke-width="1.500"/><circle cx="1422" cy="797" r="2.500" fill="#3a3fd0"/></g>
                  <g id="labels" font-family="DejaVu Sans, sans-serif" font-size="9" letter-spacing="0" fill="#333" stroke="#fff" stroke-width="2.500" stroke-opacity=".85" paint-order="stroke" text-anchor="middle"></g>
                  </g>
                  <g><use href="#marker" x="1508" y="388" width="22" height="22"/><use href="#marker" x="1170" y="729" width="22" height="22"/><use href="#marker" x="1088" y="814" width="22" height="22"/><use href="#marker" x="1116" y="957" width="22" height="22"/><use href="#marker" x="1405" y="795" width="22" height="22"/></g>
                </svg>

                <div class="absolute left-[11px] top-[10px] flex w-[26px] flex-col gap-[10px]">
                  <span class="flex size-[26px] items-center justify-center rounded-[4px] bg-[#f4f4f4] shadow-[0_1px_4px_#0008]"><svg class="size-[14px]" viewBox="0 0 14 14"><path d="M13.500.5L9.500 4.500M.5 13.500l4-4" stroke="#000" stroke-width="2.500"/><path d="M7.500 1v5.500H13zM6.500 13V7.500H1z"/></svg></span>
                  <div class="rounded-[4px] bg-white font-bold shadow-[0_1px_4px_#0008]"><div class="flex h-[27px] items-center justify-center border-b border-[#ccc]"><svg class="size-[10px]" viewBox="0 0 10 10"><path d="M5 .5v9M.5 5h9" stroke="#000" stroke-width="2.200"/></svg></div><div class="flex h-[27px] items-center justify-center"><i class="h-[3px] w-[6px] bg-black"></i></div></div>
                </div>
                <div class="absolute left-[34px] top-[30px] h-[32px] w-[92px] rounded-[5px] bg-black/80 text-center text-[11px] leading-[33px] tracking-[0.150px] text-white shadow-[0_1px_5px_#0006]">Fit to bounds</div>
                <svg class="absolute left-[22px] top-[24px] h-[20px] w-[14px]" viewBox="0 0 14 20"><path d="M1 1v15l3.500-3 2.500 6 3-1.300-2.500-5.700H12z" fill="#fff" stroke="#000"/></svg>
                <span class="absolute left-[625px] top-[10px] flex size-[36px] items-center justify-center rounded-[5px] bg-white shadow-[0_1px_4px_#0006]"><svg class="size-[27px]" viewBox="0 0 27 27"><path d="M1 17l12.500 8L26 17l-3-2-9.500 6L4 15z" fill="#8c8c8c"/><path d="M1 14l12.500 8L26 14l-3-2-9.500 6L4 12z" fill="#a5a5a5" stroke="#fff" stroke-width=".7"/><path d="M1 10L13.500 2 26 10l-12.500 8z" fill="#d7d7d7" stroke="#777" stroke-width=".8"/></svg></span>
                <div class="absolute left-[11px] top-[433px] w-[26px] rounded-[4px] bg-white shadow-[0_1px_4px_#0008]">
                  <svg class="block h-[134px] w-[26px]" viewBox="0 0 26 134"><path d="M0 26.500h26M0 53.500h26M0 80.500h26M0 107.500h26" stroke="#ccc"/><g fill="#464646"><path d="M9 17l8-7" stroke="#464646" stroke-width="1.600"/><path d="M7 15.500h3.500V19H7zM15.500 7.500H19V11h-3.500z"/><path d="M13 34l6 4.500-2 7.500H9l-2-7.500z"/><path d="M8 62h10v10H8z"/><circle cx="13" cy="94" r="5.500"/><path d="M13 115a4.800 4.800 0 0 1 4.800 4.800q0 3-4.800 8.200-4.800-5.200-4.800-8.200A4.800 4.800 0 0 1 13 115zm0 3a2 2 0 1 0 .01 0z" fill-rule="evenodd"/></g></svg>
                </div>
                <div class="absolute left-[11px] top-[579px] w-[26px] rounded-[4px] bg-[#f4f4f4] shadow-[0_1px_4px_#0008]">
                  <svg class="block h-[53px] w-[26px]" viewBox="0 0 26 53"><path d="M0 26.500h26" stroke="#ccc"/><path d="M15 9H9.500Q8 9 8 10.500v7Q8 19 9.500 19h7q1.500 0 1.500-1.500V14M12 15.500l6.500-7" fill="none" stroke="#b9b9b9" stroke-width="1.700"/><path d="M8 36h10M11 36v-2h4v2" fill="none" stroke="#c2c2c2" stroke-width="1.300"/><path d="M9 38h8v8H9z" fill="#d2d2d2" stroke="#c2c2c2"/></svg>
                </div>
                <div class="absolute left-[6px] top-[642px] h-[17px] w-[55px] border-2 border-t-0 border-[#777] bg-white/50 pl-[5px] text-[11px] leading-[15px] tracking-normal">10 km</div>
                <div class="absolute bottom-0 right-0 h-[15px] whitespace-nowrap bg-white/70 pl-[5px] pr-[4px] text-[11px] leading-[15px] tracking-[0px] text-[#333]"><span class="text-[#0078a8]">Leaflet</span> | © <span class="text-[#0078a8]">OpenStreetMap</span> Contributors</div>
              </div>
              <div class="flex w-[16px] flex-col items-center bg-[#e4e4e4]">
                <svg class="my-[4px] h-[6px] w-[10px]" viewBox="0 0 10 6"><path d="M1 5l4-4 4 4" fill="none" stroke="#777" stroke-width="1.600"/></svg>
                <span class="mt-[1px] h-[633px] w-[12px] rounded-[3px] border border-[#b3b3b3] bg-linear-to-r from-white to-[#e9e9e9]"></span>
                <svg class="mt-[6px] h-[6px] w-[10px]" viewBox="0 0 10 6"><path d="M1 1l4 4 4-4" fill="none" stroke="#777" stroke-width="1.600"/></svg>
              </div>
            </div>
            <div class="flex h-[17px] items-center bg-[#e4e4e4]">
              <svg class="mx-[4px] h-[10px] w-[6px]" viewBox="0 0 6 10"><path d="M5 1L1 5l4 4" fill="none" stroke="#777" stroke-width="1.600"/></svg>
              <span class="h-[12px] w-[639px] rounded-[3px] border border-[#b3b3b3] bg-[#eee]"></span>
              <svg class="ml-[7px] mr-[4px] h-[10px] w-[6px]" viewBox="0 0 6 10"><path d="M1 1l4 4-4 4" fill="none" stroke="#777" stroke-width="1.600"/></svg>
              <span class="h-[17px] flex-1 bg-white"></span>
            </div>
          </div>
        </div>
      </div>
    </div>
  </section>
</main>

<script>
const tree = [['Мій профайл',1,''],['Транзакційні дані',1,'▼'],['GPS-треки',2],['GPS-треки (Web)',2],['Моніторинг в реальному часі',2],['Задекларовані пробіги',2],['Незадекларовані пробіги',2],['Зупинки',2],['Зупинки (Web)',2,'','sel'],['Місця зупинок',2],["Прив'язки модулів до машин",2,'','it'],['Довідники',1,'▶'],['Імпорт утиліти',1,'▶','it'],['Адміністрування і безпека',1,'▶','it']];
const arrow = {'▼':'<path d="M0 1h8L4 8z" fill="#555"/>','▶':'<path d="M1 0v8l6-4z" fill="#555"/>'};
document.getElementById('tree').innerHTML = tree.map(([t,l,a,s]) =>
  `<li class="flex h-[18px] items-center whitespace-nowrap ${s==='sel'?'bg-[#39698a] text-white':''} ${s==='it'?'italic':''}"><svg class="ml-[4px] size-[8px]" viewBox="0 0 8 8">${arrow[a]||''}</svg><span class="pt-[2px] ${l===2?'ml-[20px]':'ml-[4px]'}">${t}</span></li>`).join('');

const rows = [['6 днів; 18 годин; 4...','2013-12-02 14:41:53',1],['1 година; 15 хвилин','2013-12-09 10:41:42',0],['1 година; 19 хвилин','2013-12-09 12:00:11',0],['18 годин; 20 хвилин','2013-12-09 14:40:28',1],['4 годин; 21 хвилин','2013-12-10 11:59:36',0],['4 годин; 31 хвилин','2013-12-11 10:08:11',0],['18 годин; 28 хвилин','2013-12-11 15:41:01',1],['1 година; 24 хвилин','2013-12-12 11:45:00',0],['19 годин; 2 хвилин','2013-12-12 14:24:17',1],['2 годин; 40 хвилин','2013-12-13 11:01:23',0],['2 днів; 17 годин; 4...','2013-12-13 15:16:54',1],['3 годин; 4 хвилин','2013-12-16 10:36:09',0],['2 годин; 46 хвилин','2013-12-16 13:53:43',0],['15 годин; 44 хвилин','2013-12-16 17:15:09',1],['1 година','2013-12-17 09:23:33',0],['4 годин; 37 хвилин','2013-12-17 11:59:50',0],['16 годин; 27 хвилин','2013-12-17 16:50:47',1],['1 година; 23 хвилин','2013-12-18 13:22:41',0],['16 годин; 49 хвилин','2013-12-18 16:43:06',1],['15 годин; 55 хвилин','2013-12-19 16:51:25',1],['3 годин; 49 хвилин','2013-12-20 12:03:02',0]];
document.getElementById('rows').innerHTML = rows.map(([d,s,c],i) =>
  `<div class="flex h-[26px] whitespace-nowrap border-b leading-[26px] ${i===20?'border-transparent bg-clip-padding':'border-[#d6d9df]'} ${i%2?'bg-[#f99c7a]':'bg-[#ffa07e]'}"><div class="w-[90px] border-r border-[#d6d9df] pl-[5px]">22763TA</div><div class="w-[72px] border-r border-[#d6d9df] pl-[5px]">Гараж 1</div><div class="w-[150px] border-r border-[#d6d9df] pl-[5px]">${d}</div><div class="w-[155px] border-r border-[#d6d9df] pl-[5px]">${s}</div><div class="flex w-[90px] items-center justify-center border-r border-[#d6d9df] pr-[2px]"><span class="size-[14px] rounded-[2px] border ${c?'border-[#4b6076] bg-linear-to-b from-[#e2ebf3] to-[#9fb9d2]':'border-[#8b8d94] bg-linear-to-b from-white to-[#dcdde1]'}">${c?'<svg class="size-[14px] -ml-px -mt-px" viewBox="0 0 14 14"><use href="#check"/></svg>':''}</span></div></div>`).join('');

// place names: text, centre x, baseline y, width
const places = [['Zwierzyniec',1032,362,48],['Tyszowce',1297,359,39],['Krasnobród',1122,401,44],['Łaszczów',1305,408,38],['Józefów',1062,437,31],['Tomaszów',1195,446,43],['Lubelski',1195,456,33],['Угнів',1315,502,21],['Narol',1162,513,21],['Cieszanów',1091,572,43],['Рава-Руська',1269,578,52],['Oleszyce',1055,616,36],['Сокаль',1511,437,30],['Белз',1409,494,20],['Червоноград',1490,490,55],['Соснівка',1499,543,37],['Великі',1458,570,28],['Мости',1458,580,26],['Раде',1634,552,20],['Добротвір',1548,595,44],["Кам'янка-Бузька",1532,652,72],['Жовква',1397,680,34],['ymno',986,738,22],['Korczowa',1073,738,38],['Яворів',1182,744,32],['Новояворівськ',1253,751,61],['Мостиська',1098,829,45],['Судова',1179,826,32],['Вишня',1179,836,28],['Городок',1279,834,36],['Рудки',1221,907,27],['Комарно',1297,923,37],['Новий',1153,956,27],['Калинів',1153,966,33],['Самбір',1115,983,30],['Буськ',1629,731,25],['Красне',1629,762,30],['Брюховичі',1388,767,45],['Дубляни',1440,767,38],['Рудне',1362,802,26],['Глиняни',1595,812,35],['Пустомити',1372,871,46],['Щирець',1355,912,34],['Бібрка',1516,916,27],['Перемишляни',1611,898,60],['Миколаїв',1400,979,38],['śl',980,834,8],['ил',980,953,9],['. Хи',981,974,13]];
document.getElementById('labels').innerHTML = places.map(([t,x,y,w]) => `<text x="${x}" y="${y}" textLength="${w}" lengthAdjust="spacingAndGlyphs">${t}</text>`).join('')
 + '<text x="1419" y="802" font-size="12" textLength="32">Львів</text>'
 + ['Регіональний','ландшафтний','парк','«Равське','Розточчя»'].map((t,i) => `<text x="1285" y="${611+i*9}" font-size="8.500" font-weight="bold" fill="#8fcba0" textLength="${[56,60,20,38,42][i]}" lengthAdjust="spacingAndGlyphs">${t}</text>`).join('');
</script>
</body>
</html>
